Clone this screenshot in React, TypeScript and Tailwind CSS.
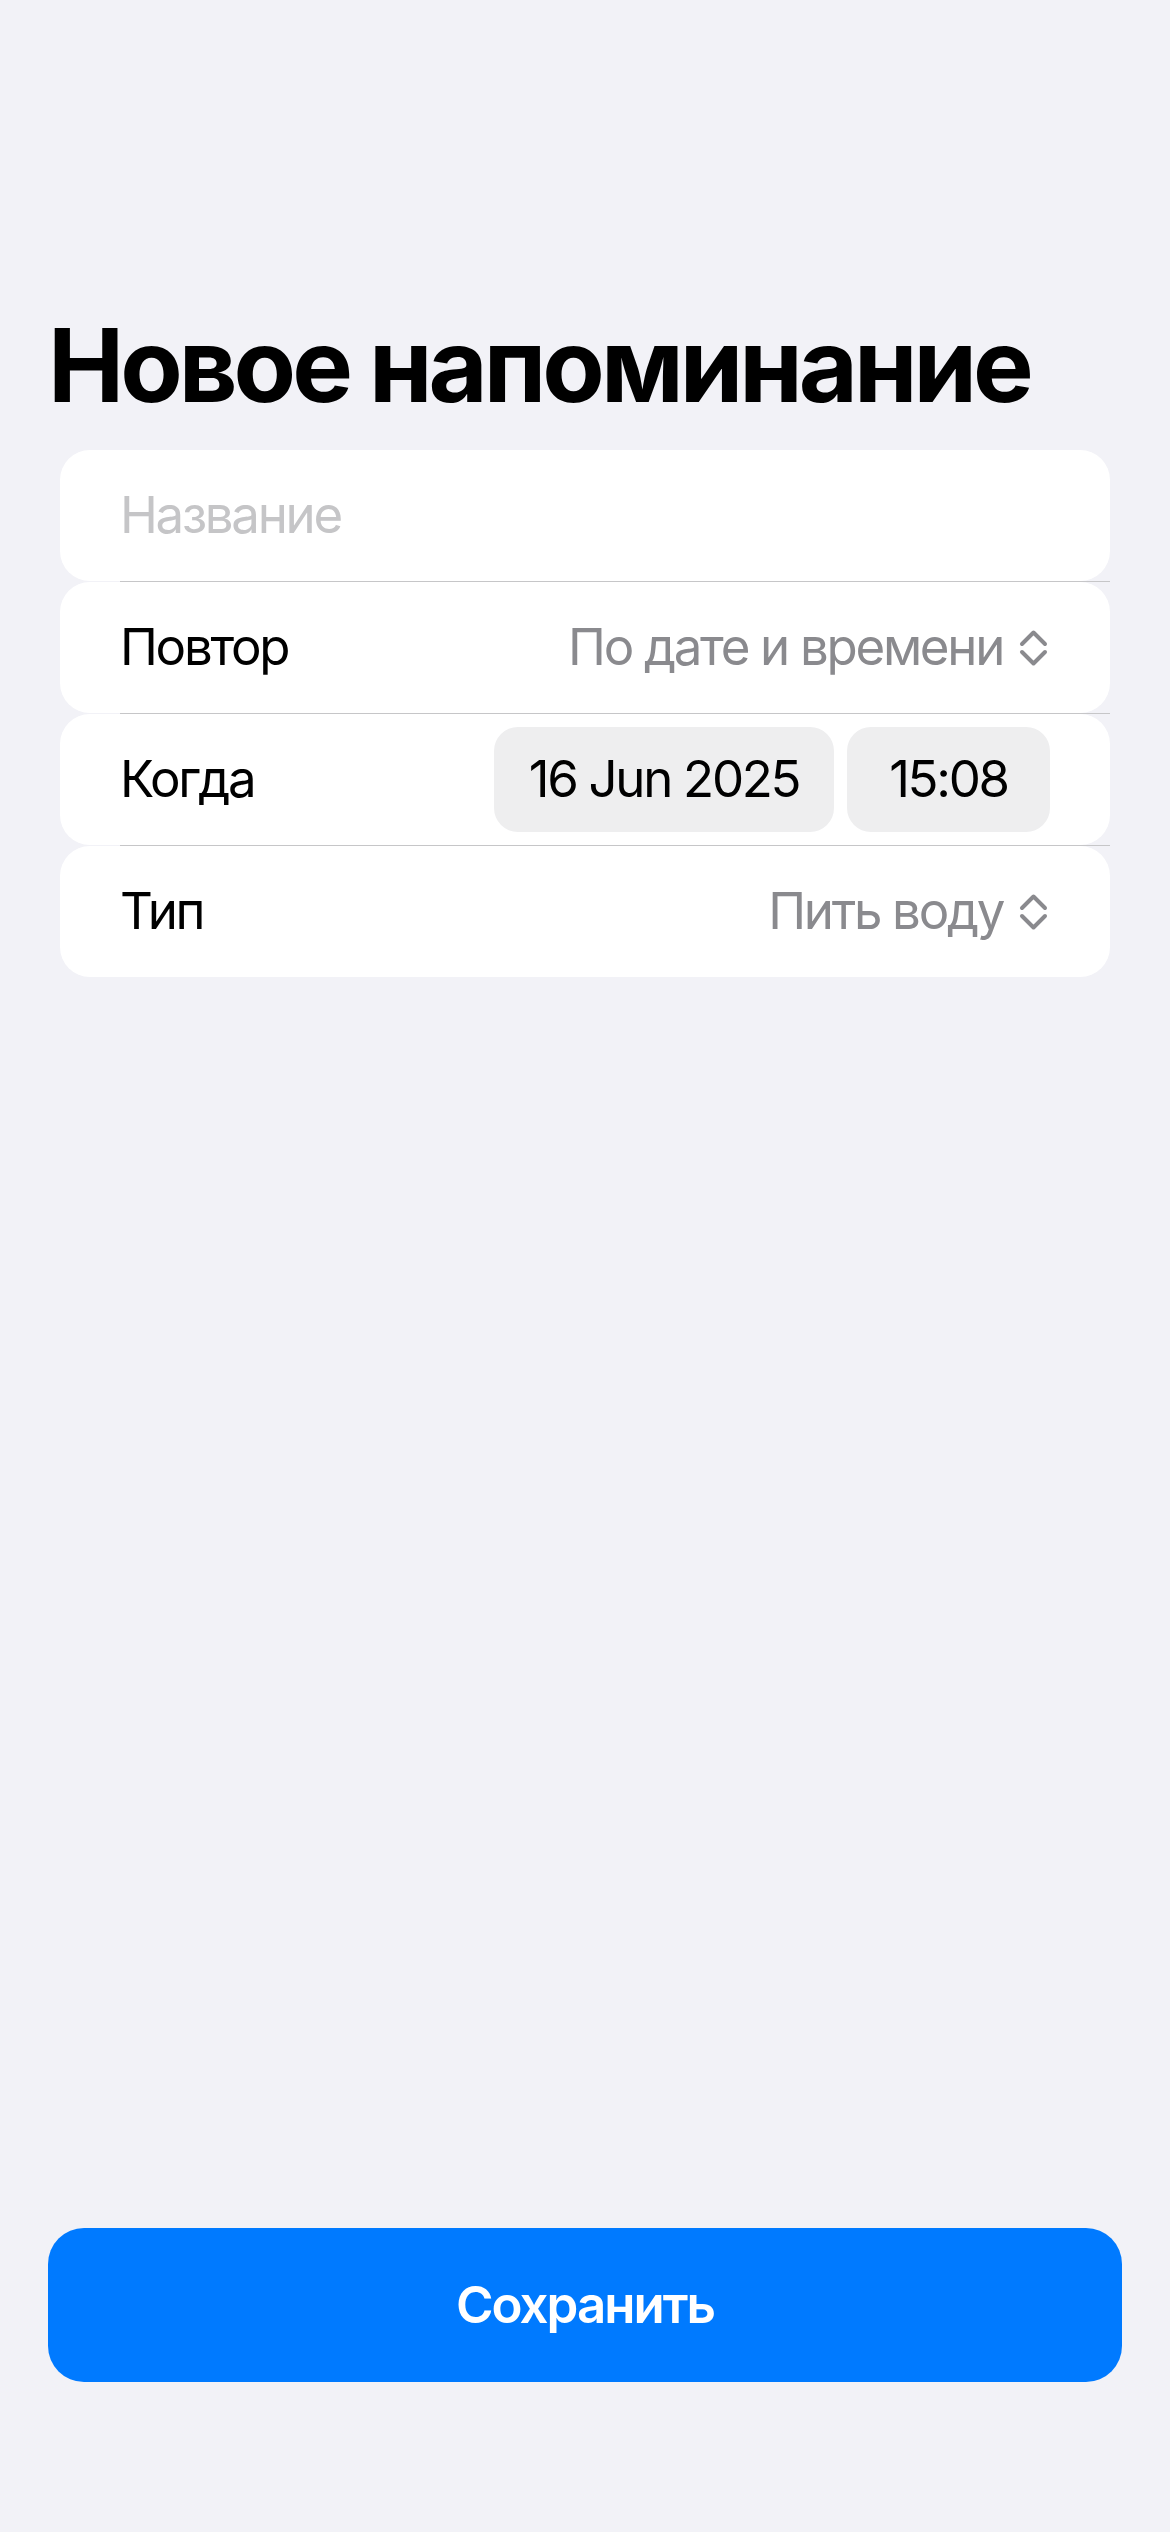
import React from "react";

function UpDown() {
  return (
    <svg width="29" height="38" viewBox="-2 -2 29 38" fill="none" className="shrink-0">
      <path d="M1 13 L12.5 1.5 L24 13" stroke="#8A8A8E" strokeWidth="4" strokeLinecap="round" strokeLinejoin="round" />
      <path d="M1 21 L12.5 32.5 L24 21" stroke="#8A8A8E" strokeWidth="4" strokeLinecap="round" strokeLinejoin="round" />
    </svg>
  );
}

function Sep() {
  return <div className="ml-[60px] h-px bg-[#C6C6C8]" />;
}

export default function App() {
  return (
    <div
      className="flex h-[2532px] w-full flex-col bg-[#F2F2F7] text-black"
      style={{ fontFamily: "Inter, 'Noto Sans', sans-serif" }}
    >
      <h1 className="pl-[48px] pt-[304px] text-[102px] font-bold leading-[122px] tracking-[-4px]">
        Новое напоминание
      </h1>

      <div className="mt-[24px] flex flex-col px-[60px] text-[51px] tracking-[-2.3px]">
        <div className="flex h-[131px] items-center rounded-[30px] bg-white pl-[60px] pr-[60px]">
          <span className="text-[#C5C5C7]">Название</span>
        </div>
        <Sep />
        <div className="flex h-[131px] items-center justify-between rounded-[30px] bg-white pl-[60px] pr-[62px]">
          <span>Повтор</span>
          <div className="flex items-center gap-[16px]">
            <span className="text-[#8A8A8E]">По дате и времени</span>
            <UpDown />
          </div>
        </div>
        <Sep />
        <div className="flex h-[131px] items-center justify-between rounded-[30px] bg-white pl-[60px] pr-[60px]">
          <span>Когда</span>
          <div className="flex items-center gap-[13px]">
            <div className="flex h-[105px] w-[340px] items-center justify-center rounded-[24px] bg-[#EEEEEF]">
              16 Jun 2025
            </div>
            <div className="flex h-[105px] w-[203px] items-center justify-center rounded-[24px] bg-[#EEEEEF]">
              15:08
            </div>
          </div>
        </div>
        <Sep />
        <div className="flex h-[131px] items-center justify-between rounded-[30px] bg-white pl-[60px] pr-[62px]">
          <span>Тип</span>
          <div className="flex items-center gap-[16px]">
            <span className="text-[#8A8A8E]">Пить воду</span>
            <UpDown />
          </div>
        </div>
      </div>

      <div className="flex-1" />

      <div className="px-[48px] pb-[150px]">
        <button className="flex h-[154px] w-full items-center justify-center rounded-[36px] bg-[#007AFF] text-[51px] font-semibold tracking-[-2px] text-white">
          Сохранить
        </button>
      </div>
    </div>
  );
}
